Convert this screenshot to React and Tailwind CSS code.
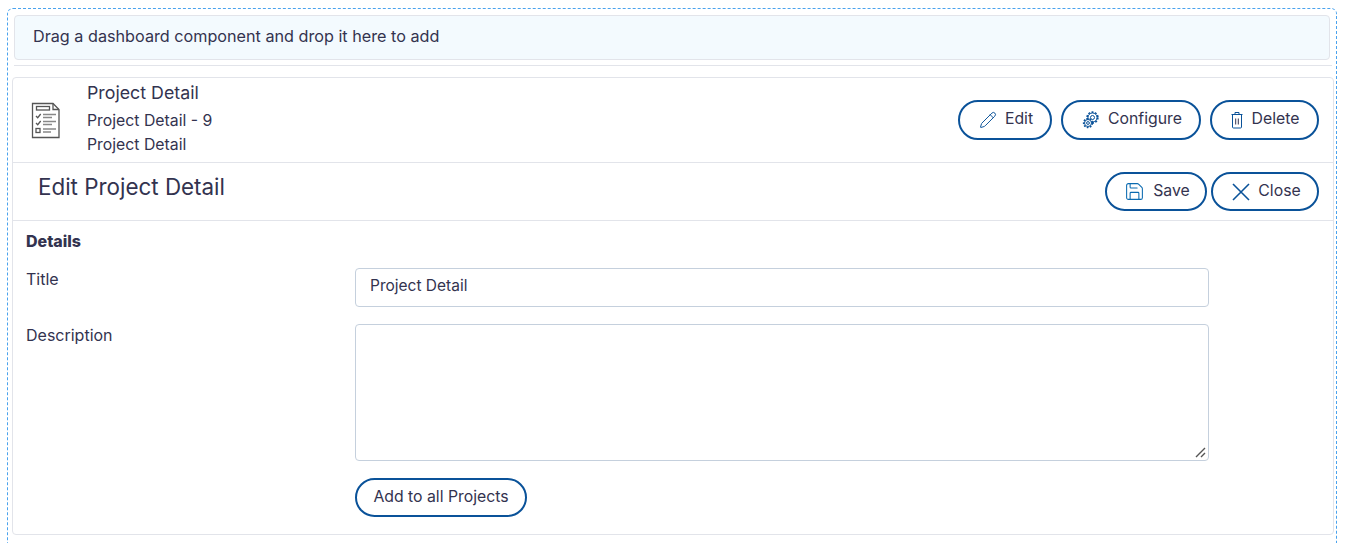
import { Pencil, Save } from 'lucide-react';

const font = "font-['Inter','Liberation_Sans',sans-serif]";

function PillButton({ icon, children, className = '' }) {
  return (
    <button className={`flex items-center justify-center gap-2 h-[40px] rounded-full border-2 border-[#0a5299] bg-white text-[15.8px] text-[#33334f] ${className}`}>
      {icon}
      <span className="-mt-0.5">{children}</span>
    </button>
  );
}

function ReportIcon() {
  return (
    <svg width="30" height="37" viewBox="0 0 30 37" fill="none" stroke="#555" strokeWidth="1.3">
      <path d="M1.5 1.5H22L28 7.5V35.5H1.5Z" />
      <path d="M22 1.5V7.5H28" />
      <rect x="5.5" y="4.5" width="13" height="3.5" />
      <path d="M5 14l1.7 1.7 3-3.7M5 21l1.7 1.7 3-3.7" />
      <rect x="5" y="26.5" width="4" height="4" />
      <path d="M12 12.5h13M12 15.5h9M12 19.5h13M12 22.5h9M12 27h13M12 30h8" stroke="#888" />
    </svg>
  );
}

function GearsIcon() {
  return (
    <svg width="18" height="18" viewBox="0 0 18 18" fill="none" stroke="#0a5299" strokeWidth="1">
      <circle cx="10.5" cy="6.5" r="4.5" />
      <circle cx="10.5" cy="6.5" r="5.4" strokeWidth="1.6" strokeDasharray="2 1.4" />
      <circle cx="10.5" cy="6.5" r="2" />
      <circle cx="6" cy="12" r="3.5" fill="#fff" />
      <circle cx="6" cy="12" r="4.4" strokeWidth="1.5" strokeDasharray="1.8 1.3" />
      <circle cx="6" cy="12" r="1.4" />
    </svg>
  );
}

function TrashIcon() {
  return (
    <svg width="14" height="18" viewBox="0 0 14 18" fill="none" stroke="#0a5299" strokeWidth="1">
      <path d="M1.5 3.5h11M5 3.5V1.5h4v2" />
      <path d="M2.5 3.5V16a1 1 0 0 0 1 1h7a1 1 0 0 0 1-1V3.5" />
      <path d="M5.7 7.5v6M8.3 7.5v6" stroke="#33334f" />
    </svg>
  );
}

function CloseIcon() {
  return (
    <svg width="18" height="18" viewBox="0 0 18 18" fill="none" stroke="#0a5299" strokeWidth="1.6">
      <path d="M1 1l16 16M17 1L1 17" />
    </svg>
  );
}

export default function App() {
  return (
    <div className={`${font} h-[543px] overflow-hidden bg-white pt-[8px] pl-[7px] pr-[8px] text-[#33334f]`}>
      <div className="rounded-[6px] border border-dashed border-[#4aa3ee] h-[600px] pl-[4px] pr-[2px] pt-[6px]">
        <div className="mx-[2px] pb-[5px] border-b border-[#e2e4ea]">
          <div className="flex items-center h-[45px] mr-[2px] rounded-[4px] border border-[#e2e4ea] bg-[#f3fafe] pl-[18px] pb-[3px] text-[16.2px]">
            Drag a dashboard component and drop it here to add
          </div>
        </div>

        <div className="mt-[11px] h-[458px] rounded-[4px] border border-[#e2e4ea] bg-white">
          <div className="flex items-center h-[85px] border-b border-[#e2e4ea] pr-[14px]">
            <div className="w-[74px] pl-[18px] pt-[1px]">
              <ReportIcon />
            </div>
            <div className="flex-1 flex flex-col">
              <div className="text-[17.8px] leading-[24px] -mt-[3px]">Project Detail</div>
              <div className="text-[15.8px] leading-[24px] mt-[4px]">Project Detail - 9</div>
              <div className="text-[15.8px] leading-[24px]">Project Detail</div>
            </div>
            <div className="flex gap-[9px]">
              <PillButton className="w-[94px] pl-[2px]" icon={<Pencil size={18} strokeWidth={1.3} className="text-[#0a5299]" />}>Edit</PillButton>
              <PillButton className="w-[140px] pl-[2px]" icon={<GearsIcon />}>Configure</PillButton>
              <PillButton className="w-[109px]" icon={<TrashIcon />}>Delete</PillButton>
            </div>
          </div>

          <div className="flex items-start justify-between h-[58px] border-b border-[#e2e4ea] pr-[14px]">
            <div className="pl-[25px] pt-[9px] text-[22.4px] leading-[30px] text-[#33334f]">Edit Project Detail</div>
            <div className="flex gap-[4px] pt-[9px]">
              <PillButton className="w-[102px] !h-[39px] pl-[2px]" icon={<Save size={21} strokeWidth={1.2} className="text-[#0a6ab0]" />}>Save</PillButton>
              <PillButton className="w-[108px] !h-[39px] pl-[3px]" icon={<CloseIcon />}>Close</PillButton>
            </div>
          </div>

          <div className="pl-[13px] pt-[9px]">
            <div className="text-[16px] font-extrabold leading-[22px]">Details</div>
            <div className="mt-[16px] flex">
              <label className="w-[329px] text-[16px] leading-[22px]">Title</label>
              <input
                readOnly
                value="Project Detail"
                className="w-[854px] h-[39px] rounded-[4px] border border-[#c5d0dd] px-[14px] pb-[4px] text-[15.5px] text-[#33334f] outline-none"
              />
            </div>
            <div className="mt-[17px] flex">
              <label className="w-[329px] text-[16px] leading-[22px]">Description</label>
              <div className="relative">
                <textarea className="block w-[854px] h-[137px] rounded-[4px] border border-[#c5d0dd] outline-none resize-none" />
                <svg className="absolute right-[3px] bottom-[3px]" width="11" height="11" viewBox="0 0 11 11" stroke="#555" strokeWidth="1.4">
                  <path d="M1 10L10 1M6 10l4-4" />
                </svg>
              </div>
            </div>
            <div className="mt-[17px] pl-[329px]">
              <PillButton className="w-[172px] !h-[39px]">Add to all Projects</PillButton>
            </div>
          </div>
        </div>
      </div>
    </div>
  );
}
